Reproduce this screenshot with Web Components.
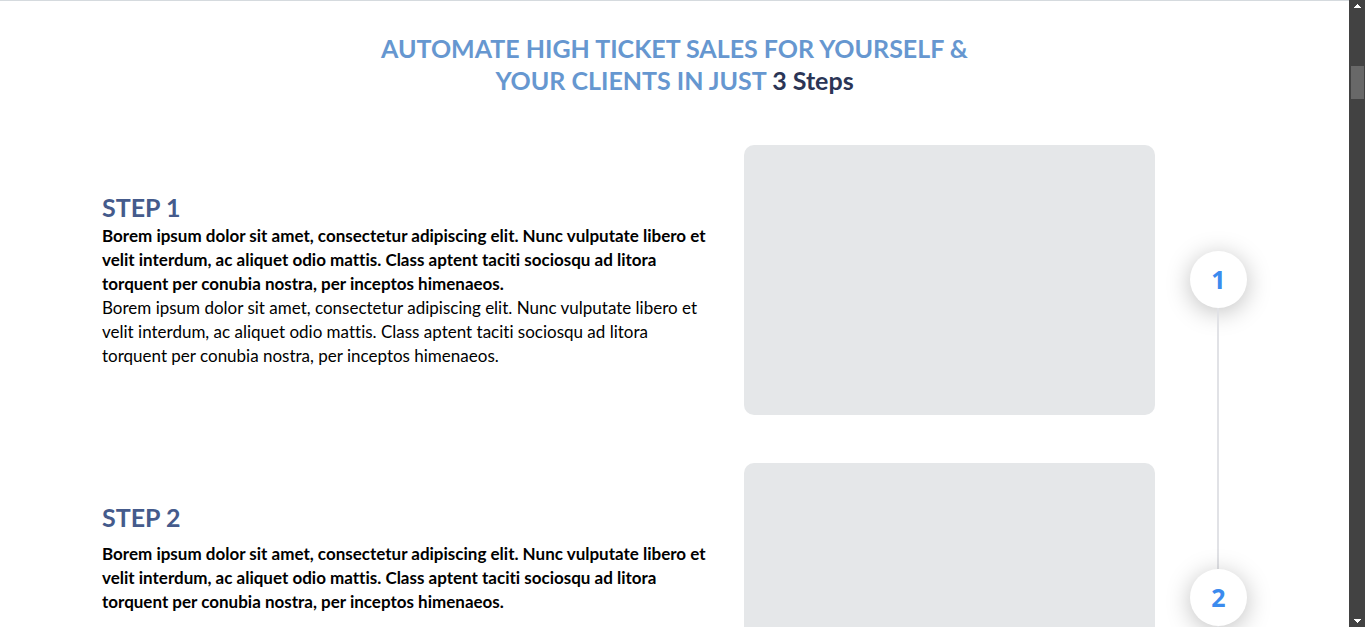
<!DOCTYPE html>
<html lang="en">
<head>
<meta charset="utf-8">
<meta name="viewport" content="width=device-width, initial-scale=1">
<title>Three Steps</title>
<style>
html, body { margin: 0; height: 100%; overflow: hidden; }
body { font-family: Lato, "Liberation Sans", sans-serif; font-variant-ligatures: none; background: #fff; color: #000; }
</style>
</head>
<body>
<steps-page>
  <steps-heading>AUTOMATE HIGH TICKET SALES FOR YOURSELF &amp;<br>YOUR CLIENTS IN JUST <span slot="accent">3 Steps</span></steps-heading>
  <step-list>
    <step-row number="1">
      <span slot="title">STEP 1</span>
      <span slot="lead">Borem ipsum dolor sit amet, consectetur adipiscing elit. Nunc vulputate libero et velit interdum, ac aliquet odio mattis. Class aptent taciti sociosqu ad litora torquent per conubia nostra, per inceptos himenaeos.</span>
      <span slot="body">Borem ipsum dolor sit amet, consectetur adipiscing elit. Nunc vulputate libero et velit interdum, ac aliquet odio mattis. Class aptent taciti sociosqu ad litora torquent per conubia nostra, per inceptos himenaeos.</span>
    </step-row>
    <step-row number="2" spaced>
      <span slot="title">STEP 2</span>
      <span slot="lead">Borem ipsum dolor sit amet, consectetur adipiscing elit. Nunc vulputate libero et velit interdum, ac aliquet odio mattis. Class aptent taciti sociosqu ad litora torquent per conubia nostra, per inceptos himenaeos.</span>
    </step-row>
  </step-list>
</steps-page>
<script>
const define = (name, html, setup) => {
  customElements.define(name, class extends HTMLElement {
    constructor() {
      super();
      this.attachShadow({ mode: "open" }).innerHTML = html;
    }
    connectedCallback() {
      if (setup) setup(this);
    }
  });
};

define("scroll-strip", `
<style>
:host { display: flex; flex-direction: column; width: 16px; background: #424242; }
svg { display: block; width: 16px; height: 16px; flex: none; fill: #fff; }
.track { flex: 1; padding: 50px 1px 0 2px; }
.thumb { height: 33px; background: #686868; }
</style>
<svg viewBox="0 0 16 16" shape-rendering="crispEdges"><path d="M8 4h1v1h1v1h1v1h1v1H5V7h1V6h1V5h1z"/></svg>
<div class="track"><div class="thumb"></div></div>
<svg viewBox="0 0 16 16" shape-rendering="crispEdges"><path d="M5 8h7v1h-1v1h-1v1H9v1H8v-1H7v-1H6V9H5z"/></svg>`);

define("steps-page", `
<style>
:host { display: flex; height: 100vh; overflow: hidden; }
main { flex: 1; min-width: 0; overflow: hidden; border-top: 1px solid #d5dade; padding: 31px 102px 0; box-sizing: border-box; }
</style>
<main><slot></slot></main>
<scroll-strip></scroll-strip>`);

define("steps-heading", `
<style>
:host { display: block; }
h2 { margin: 0; font-size: 25px; line-height: 32px; font-weight: 700; color: #6697d0; text-align: center; }
::slotted(span) { color: #2b3556; }
</style>
<h2><slot></slot><slot name="accent"></slot></h2>`);

define("step-list", `
<style>
:host { display: flex; flex-direction: column; gap: 48px; padding-top: 49px; }
</style>
<slot></slot>`);

define("step-row", `
<style>
:host { display: grid; grid-template-columns: minmax(0, 607fr) minmax(0, 411fr) 57px; gap: 35px; align-items: center; }
h3 { margin: 0; padding-bottom: 2px; font-size: 25px; line-height: 30px; font-weight: 700; color: #455b8c; }
p { margin: 0; font-size: 17px; line-height: 24px; }
.lead { font-weight: 700; }
:host([spaced]) .lead { margin: 8px 0; }
:host([spaced]) .body { min-height: 72px; }
.media { height: 270px; border-radius: 10px; background: #e5e7e9; }
.marker { position: relative; display: grid; place-items: center; box-sizing: border-box; width: 57px; height: 57px; margin-bottom: 1px; padding-bottom: 2px; border-radius: 50%; background: #fff; box-shadow: 0 4px 24px rgba(0, 0, 0, .25); color: #3b8bee; font: 700 25px "Noto Sans", sans-serif; }
.marker::after { content: ""; position: absolute; top: 100%; left: 27px; width: 2px; height: 261px; background: #e1e2e6; }
</style>
<div>
  <h3><slot name="title"></slot></h3>
  <p class="lead"><slot name="lead"></slot></p>
  <p class="body"><slot name="body"></slot></p>
</div>
<div class="media"></div>
<div class="marker"></div>`, el => {
  el.shadowRoot.querySelector(".marker").textContent = el.getAttribute("number");
});
</script>
</body>
</html>
